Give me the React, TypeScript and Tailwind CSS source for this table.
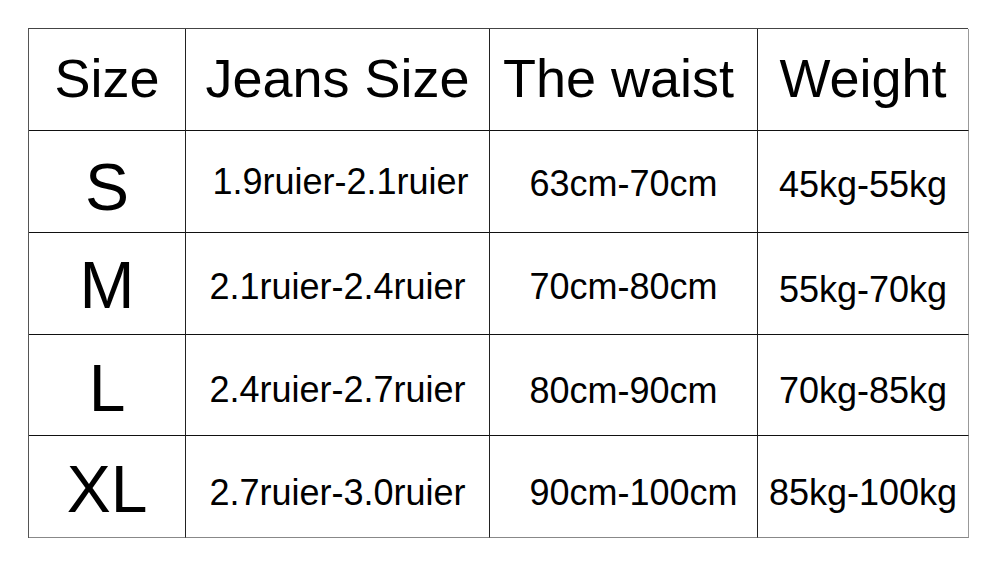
const header = [
  { text: 'Size', cls: '' },
  { text: 'Jeans Size', cls: '' },
  { text: 'The waist', cls: 'mr-[10px]' },
  { text: 'Weight', cls: '' },
];

// each cell carries its own small nudge so the glyphs sit where the original ones do
const rows = [
  [
    { text: 'S', cls: 'mt-[10px]' },
    { text: '1.9ruier-2.1ruier', cls: 'mt-[1px] ml-[6px]' },
    { text: '63cm-70cm', cls: 'mt-[4px]' },
    { text: '45kg-55kg', cls: 'mt-[6px]' },
  ],
  [
    { text: 'M', cls: 'mt-[2px]' },
    { text: '2.1ruier-2.4ruier', cls: 'mt-[6px]' },
    { text: '70cm-80cm', cls: 'mt-[6px]' },
    { text: '55kg-70kg', cls: 'mt-[12px]' },
  ],
  [
    { text: 'L', cls: 'mt-[5px]' },
    { text: '2.4ruier-2.7ruier', cls: 'mt-[10px]' },
    { text: '80cm-90cm', cls: 'mt-[12px]' },
    { text: '70kg-85kg', cls: 'mt-[12px]' },
  ],
  [
    { text: 'XL', cls: 'mt-[4px]' },
    { text: '2.7ruier-3.0ruier', cls: 'mt-[12px]' },
    { text: '90cm-100cm', cls: 'mt-[12px] ml-[20px]' },
    { text: '85kg-100kg', cls: 'mt-[12px]' },
  ],
];

const rowHeights = ['h-[102px]', 'h-[102px]', 'h-[101px]', 'h-[102px]'];

export default function App() {
  return (
    <div
      className="w-[1000px] h-[570px] bg-white pl-[28px] pt-[28px] text-black"
      style={{ fontFamily: '"Liberation Sans", Arial, sans-serif' }}
    >
      <div className="grid w-[940px] grid-cols-[157px_304px_268px_211px] border-t border-l border-t-[#444] border-l-[#555]">
        {header.map((h, i) => (
          <div
            key={h.text}
            className={`flex h-[102px] items-center justify-center border-b border-r border-b-[#111] ${i === 3 ? 'border-r-[#999]' : 'border-r-[#222]'} text-[54px] leading-none`}
          >
            <span className={`-mt-[4px] ${h.cls}`}>{h.text}</span>
          </div>
        ))}
        {rows.map((r, ri) =>
          r.map((c, ci) => (
            <div
              key={ri + '-' + ci}
              className={`flex ${rowHeights[ri]} items-center justify-center border-b border-r ${ri === 3 ? 'border-b-[#888]' : 'border-b-[#111]'} ${ci === 3 ? 'border-r-[#999]' : 'border-r-[#222]'} leading-none ${ci === 0 ? 'text-[66px]' : 'text-[36px]'}`}
            >
              <span className={c.cls}>{c.text}</span>
            </div>
          ))
        )}
      </div>
    </div>
  );
}
